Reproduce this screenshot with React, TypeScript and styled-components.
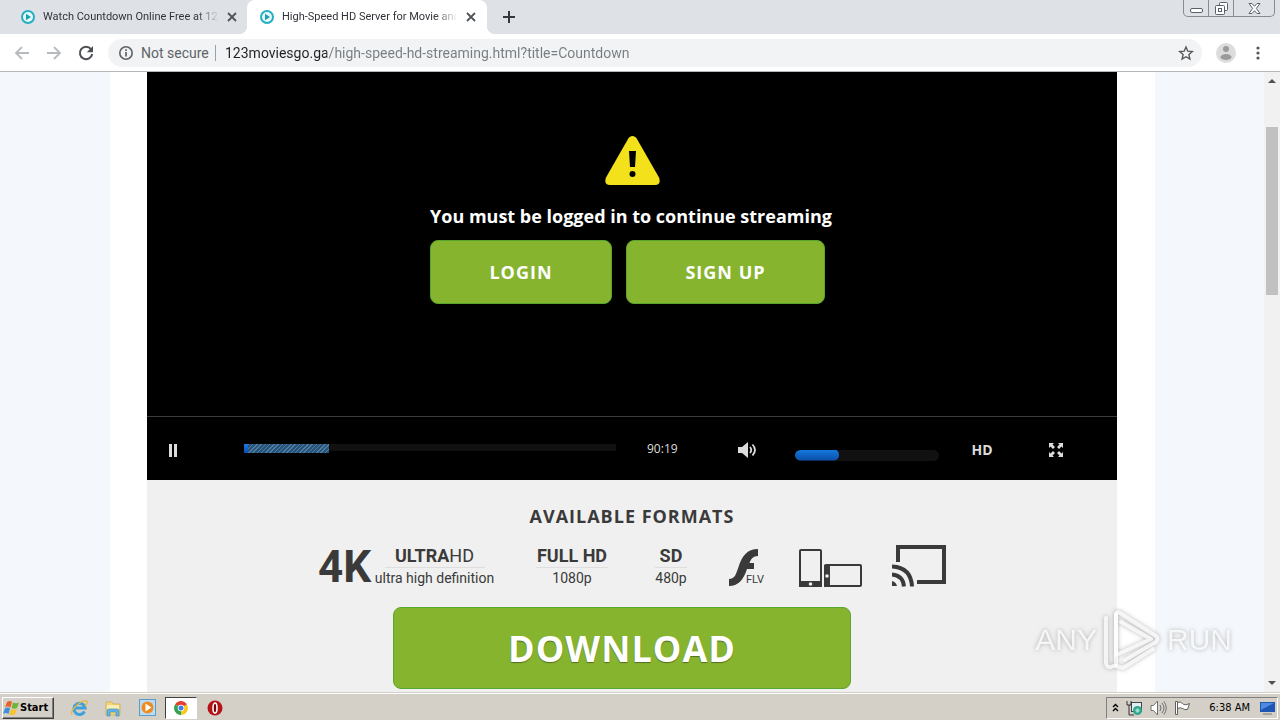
import React, { useState } from "react";
import styled, { createGlobalStyle, css } from "styled-components";

const uiFont = `"DejaVu Sans Condensed", "DejaVu Sans", sans-serif`;
const chromeFont = `Roboto, sans-serif`;

const GlobalStyle = createGlobalStyle`
  * { box-sizing: border-box; }
  html, body { margin: 0; height: 100%; overflow: hidden; }
  body { font-family: "Open Sans", sans-serif; background: #fff; }
  button { margin: 0; padding: 0; border: 0; background: none; font: inherit; color: inherit; cursor: pointer; }
  svg { display: block; flex: none; }
  h1, h2, p { margin: 0; }
`;

const Desktop = styled.div`
  display: flex;
  flex-direction: column;
  height: 100vh;
`;

/* Browser chrome */

const TabStrip = styled.div`
  display: flex;
  align-items: stretch;
  height: 34px;
  flex: none;
  background: #dee1e6;
  font: 11px ${chromeFont};
`;

const Tab = styled.div<{ $active?: boolean }>`
  position: relative;
  display: flex;
  align-items: center;
  width: ${(p) => (p.$active ? 240 : 247)}px;
  padding: 0 10px 0 ${(p) => (p.$active ? 12 : 20)}px;
  gap: 7px;
  color: #303338;
  border-radius: 8px 8px 0 0;
  background: ${(p) => (p.$active ? "#fff" : "transparent")};
  ${(p) =>
    p.$active &&
    css`
      &::before, &::after {
        content: "";
        position: absolute;
        bottom: 0;
        width: 8px;
        height: 8px;
      }
      &::before { left: -8px; background: radial-gradient(circle at 0 0, transparent 8px, #fff 8px); }
      &::after { right: -8px; background: radial-gradient(circle at 100% 0, transparent 8px, #fff 8px); }
    `}
`;

const TabTitle = styled.button`
  flex: 1;
  min-width: 0;
  overflow: hidden;
  white-space: nowrap;
  text-align: left;
  line-height: 16px;
  mask-image: linear-gradient(90deg, #000 calc(100% - 24px), transparent);
`;

const IconButton = styled.button<{ $w?: number }>`
  display: flex;
  align-items: center;
  justify-content: center;
  flex: none;
  width: ${(p) => p.$w ?? 16}px;
  height: 20px;
`;

const NewTab = styled(IconButton)`
  margin-left: 12px;
  align-self: center;
`;

const WindowButtons = styled.div`
  display: flex;
  height: 17px;
  margin: 0 5px 0 auto;
  border: 1px solid #868b94;
  border-top: 0;
  border-radius: 0 0 5px 5px;
`;

const WindowButton = styled.button<{ $w: number }>`
  display: flex;
  align-items: center;
  justify-content: center;
  width: ${(p) => p.$w}px;
  & + & { border-left: 1px solid #868b94; }
`;

const Toolbar = styled.div`
  display: flex;
  align-items: center;
  height: 38px;
  flex: none;
  padding: 0 14px 0 12px;
  background: #fff;
  border-bottom: 1px solid #b4b6b9;
`;

const NavButtons = styled.div`
  display: flex;
  gap: 12px;
`;

const AddressBar = styled.form`
  display: flex;
  align-items: center;
  flex: 1;
  height: 28px;
  margin: 0 14px 0 12px;
  padding: 0 8px 0 10px;
  border-radius: 14px;
  background: #f1f3f4;
  font: 14px ${chromeFont};
`;

const SecurityChip = styled.button`
  display: flex;
  align-items: center;
  gap: 7px;
  width: 98px;
  border-right: 1px solid #9aa0a6;
  color: #5f6368;
  line-height: 16px;
  white-space: nowrap;
`;

const Url = styled.input`
  flex: 1;
  min-width: 0;
  margin-left: 9px;
  padding: 0;
  border: 0;
  outline: 0;
  font: inherit;
  line-height: 20px;
  color: #5f6368;
  background: linear-gradient(90deg, #202124 102px, #777c81 102px);
  background-clip: text;
  -webkit-text-fill-color: transparent;
`;

const ToolbarEnd = styled.div`
  display: flex;
  align-items: center;
  gap: 14px;
`;

/* Page */

const Viewport = styled.div`
  position: relative;
  display: flex;
  flex: 1;
  min-height: 0;
  overflow: hidden;
  background: #f4f7fb;
`;

const Page = styled.main`
  flex: 1;
  min-width: 0;
  padding: 0 109px 0 110px;
`;

const Sheet = styled.div`
  padding: 0 38px 0 37px;
  background: #fff;
  height: 100%;
`;

const Video = styled.section`
  display: flex;
  flex-direction: column;
  align-items: center;
  height: 344px;
  padding-top: 64px;
  background: #000;
  color: #fff;
`;

const Notice = styled.div`
  width: 404px;
  margin-top: 18px;
`;

const NoticeText = styled.p`
  font-size: 18px;
  font-weight: 700;
  line-height: 26px;
  white-space: nowrap;
`;

const NoticeActions = styled.div`
  display: flex;
  gap: 14px;
  margin-top: 11px;
`;

const GreenButton = styled.button<{ $w: number; $large?: boolean }>`
  width: ${(p) => p.$w}px;
  height: ${(p) => (p.$large ? 82 : 64)}px;
  border: 1px solid #57a82e;
  border-radius: 8px;
  background: #87b42f;
  color: #fff;
  font-size: ${(p) => (p.$large ? 36 : 18)}px;
  font-weight: 700;
  letter-spacing: 1px;
  text-shadow: ${(p) => (p.$large ? "0 1px 1px rgba(0, 0, 0, 0.4)" : "none")};
`;

const Controls = styled.div`
  display: flex;
  align-items: center;
  height: 64px;
  padding: 3px 51px 0 18px;
  border-top: 1px solid #3c3c3c;
  background: #000;
  color: #dcdcdc;
`;

const rangeReset = css`
  appearance: none;
  margin: 0;
  outline: 0;
  &::-webkit-slider-thumb { appearance: none; width: 1px; height: 1px; }
`;

const Seek = styled.input`
  ${rangeReset}
  flex: 1;
  min-width: 0;
  height: 9px;
  margin: 0 0 4px 63px;
  background:
    linear-gradient(#1a7be0, #0a4fb0) 0 0 / 4px 9px no-repeat,
    repeating-linear-gradient(135deg, #4f7fa0 0 1px, #28527c 1px 3px) 0 0 / 85px 9px no-repeat,
    linear-gradient(#111, #111) 0 0 / 100% 7px no-repeat;
`;

const Time = styled.time`
  width: 91px;
  margin: 0 0 2px 31px;
  font-size: 12px;
  line-height: 16px;
`;

const Volume = styled.input`
  ${rangeReset}
  width: 144px;
  height: 11px;
  margin: 10px 31px 0 38px;
  border-radius: 6px;
  background: #111;
  overflow: hidden;
  &::-webkit-slider-runnable-track {
    height: 11px;
    background: linear-gradient(#1478dc, #0a4ca8);
    clip-path: inset(0 100px 0 0 round 5px);
  }
`;

const Quality = styled.button`
  width: 24px;
  margin-right: 52px;
  font-size: 14px;
  font-weight: 700;
  line-height: 20px;
`;

const Formats = styled.section`
  display: flex;
  flex-direction: column;
  align-items: center;
  height: 100%;
  padding-top: 24px;
  background: #f0f0f0;
  color: #3a3a3a;
`;

const FormatsTitle = styled.h2`
  font-size: 18px;
  font-weight: 700;
  line-height: 24px;
  letter-spacing: 1px;
`;

const FormatRow = styled.ul`
  display: flex;
  align-items: flex-start;
  gap: 30px;
  height: 44px;
  margin: 16px 0 19px;
  padding: 0;
  list-style: none;
  font-family: Roboto, sans-serif;
`;

const Format = styled.li<{ $w: number }>`
  display: flex;
  width: ${(p) => p.$w}px;
  height: 44px;
  align-items: flex-end;
`;

const FourK = styled.strong`
  width: 51px;
  font-size: 44px;
  line-height: 42px;
  font-weight: 700;
`;

const Label = styled.div`
  flex: 1;
  font-size: 14px;
  line-height: 20px;
  text-align: center;
  white-space: nowrap;
`;

const LabelName = styled.div<{ $w: number }>`
  width: ${(p) => p.$w}px;
  margin: 0 auto;
  border-bottom: 1px solid #dedede;
  font-size: 18px;
  line-height: 22px;
`;

const DownloadSlot = styled.div`
  margin-right: 20px;
`;

const Scrollbar = styled.div`
  display: flex;
  flex-direction: column;
  align-items: center;
  width: 16px;
  flex: none;
  padding: 6px 0;
  background: #f1f1f1;
`;

const ScrollThumb = styled.div`
  width: 12px;
  height: 168px;
  margin: 43px 0 auto;
  background: #c1c1c1;
`;

const Watermark = styled.div`
  position: absolute;
  right: 48px;
  bottom: 20px;
  display: flex;
  align-items: center;
  gap: 4px;
  height: 64px;
  color: rgba(255, 255, 255, 0.8);
  font: 30px "Liberation Sans", sans-serif;
  filter: drop-shadow(0 0 2px rgba(80, 80, 80, 0.5));
`;

/* Taskbar */

const Taskbar = styled.footer`
  display: flex;
  align-items: center;
  height: 28px;
  flex: none;
  padding: 2px 2px 0;
  border-top: 1px solid #d4d0c8;
  box-shadow: inset 0 1px #fff;
  background: #d4d0c8;
  font: 11px ${uiFont};
  color: #000;
`;

const StartButton = styled.button`
  display: flex;
  align-items: center;
  width: 52px;
  height: 22px;
  border: 1px solid;
  border-color: #fff #404040 #404040 #fff;
  box-shadow: inset -1px -1px #808080;
  font-weight: 700;
`;

const Launcher = styled.div`
  display: flex;
  gap: 2px;
  margin-left: 9px;
`;

const TaskButton = styled.button<{ $active?: boolean }>`
  display: flex;
  align-items: center;
  justify-content: center;
  width: 32px;
  height: 22px;
  border: 1px solid transparent;
  ${(p) =>
    p.$active &&
    css`
      background: #fff;
      border-color: #404040 #fff #fff #404040;
    `}
`;

const Tray = styled.div`
  display: flex;
  align-items: center;
  height: 22px;
  margin-left: auto;
  padding: 0 2px 0 4px;
  gap: 7px;
  border: 1px solid;
  border-color: #808080 #fff #fff #808080;
`;

const Clock = styled.time`
  margin: 0 2px 0 11px;
`;

const PlayDisc = () => (
  <svg width="16" height="16" viewBox="0 0 16 16">
    <circle cx="8" cy="8" r="6" fill="#e6f8fa" stroke="#25afc0" strokeWidth="2" />
    <path d="M6 4.8v6.4L11 8z" fill="#1c9fb2" />
  </svg>
);

const Cross = () => (
  <svg width="10" height="10" viewBox="0 0 10 10" stroke="#50545a" strokeWidth="1.8">
    <path d="M1 1l8 8M9 1l-8 8" />
  </svg>
);

const Arrow = ({ flip }: { flip?: boolean }) => (
  <svg width="16" height="16" viewBox="0 0 16 16" fill="none" stroke="#b8bbbe" strokeWidth="1.8">
    <path d={flip ? "M1 8h13M8 2l6 6-6 6" : "M15 8H2M8 2L2 8l6 6"} />
  </svg>
);

const Explorer = () => (
  <svg width="18" height="18" viewBox="0 0 18 18">
    <path d="M2 3h6l1 2h7v11H2z" fill="#f3d57a" stroke="#c9a23e" strokeWidth=".6" />
    <path d="M3 6h12v5H3z" fill="#fbeeb4" />
    <path d="M3 17v-5q0-2 2-2h8q2 0 2 2v5h-3v-4H6v4z" fill="#63b4e4" stroke="#3b89bb" strokeWidth=".6" />
  </svg>
);

export default function App() {
  const [url, setUrl] = useState("123moviesgo.ga/high-speed-hd-streaming.html?title=Countdown");
  const [seek, setSeek] = useState(23);
  const [volume, setVolume] = useState(30);

  return (
    <Desktop>
      <GlobalStyle />
      <TabStrip>
        <Tab>
          <PlayDisc />
          <TabTitle>Watch Countdown Online Free at 12</TabTitle>
          <IconButton $w={10} aria-label="Close tab"><Cross /></IconButton>
        </Tab>
        <Tab $active>
          <PlayDisc />
          <TabTitle>High-Speed HD Server for Movie and</TabTitle>
          <IconButton $w={12} aria-label="Close tab"><Cross /></IconButton>
        </Tab>
        <NewTab $w={20} aria-label="New tab">
          <svg width="12" height="12" viewBox="0 0 12 12" stroke="#34373c" strokeWidth="2"><path d="M6 0v12M0 6h12" /></svg>
        </NewTab>
        <WindowButtons>
          <WindowButton $w={24} aria-label="Minimize">
            <svg width="13" height="12" viewBox="0 0 13 12"><rect x=".5" y="6.500" width="12" height="4" rx="1.500" fill="#fff" stroke="#5a606b" /></svg>
          </WindowButton>
          <WindowButton $w={25} aria-label="Restore">
            <svg width="13" height="13" viewBox="0 0 13 13" fill="#fff" stroke="#5a606b"><rect x="4.500" y=".5" width="8" height="8" rx="1" /><rect x=".5" y="3.500" width="9" height="9" rx="1" /><rect x="3.500" y="6.500" width="3" height="3" /></svg>
          </WindowButton>
          <WindowButton $w={41} aria-label="Close">
            <svg width="13" height="11" viewBox="0 0 13 11"><path d="M1 .5h3l2.500 2.800L9 .5h3L8.300 5.500l3.700 5H9L6.500 7.700 4 10.500H1l3.700-5z" fill="#fff" stroke="#5a606b" /></svg>
          </WindowButton>
        </WindowButtons>
      </TabStrip>

      <Toolbar>
        <NavButtons>
          <IconButton $w={20} aria-label="Back"><Arrow /></IconButton>
          <IconButton $w={20} aria-label="Forward"><Arrow flip /></IconButton>
          <IconButton $w={20} aria-label="Reload">
            <svg width="16" height="16" viewBox="0 0 16 16"><path d="M13 4.200A6.200 6.200 0 1 0 14.200 9" fill="none" stroke="#4c5055" strokeWidth="2" /><path d="M15 1v6.200H8.800z" fill="#4c5055" /></svg>
          </IconButton>
        </NavButtons>
        <AddressBar onSubmit={(e) => e.preventDefault()}>
          <SecurityChip type="button">
            <svg width="16" height="16" viewBox="0 0 16 16"><circle cx="8" cy="8" r="6.200" fill="none" stroke="#5f6368" strokeWidth="1.600" /><path d="M8 7v4.500M8 4.300v1.700" stroke="#5f6368" strokeWidth="1.700" /></svg>
            Not secure
          </SecurityChip>
          <Url aria-label="Address" value={url} spellCheck={false} onChange={(e) => setUrl(e.target.value)} />
          <IconButton type="button" $w={16} aria-label="Bookmark">
            <svg width="16" height="16" viewBox="0 0 16 16"><path d="M8 2l1.800 4.200 4.500.4-3.400 3 1 4.400L8 11.700 4.100 14l1-4.400-3.400-3 4.500-.4z" fill="none" stroke="#54585d" strokeWidth="1.400" /></svg>
          </IconButton>
        </AddressBar>
        <ToolbarEnd>
          <IconButton $w={20} aria-label="Profile">
            <svg width="20" height="20" viewBox="0 0 20 20"><circle cx="10" cy="10" r="10" fill="#dcdcdc" /><circle cx="10" cy="6" r="3" fill="#9b9b9b" /><ellipse cx="10" cy="14" rx="5.500" ry="3" fill="#9b9b9b" /></svg>
          </IconButton>
          <IconButton $w={16} aria-label="Menu">
            <svg width="4" height="14" viewBox="0 0 4 14" fill="#54585d"><circle cx="2" cy="2" r="1.600" /><circle cx="2" cy="7" r="1.600" /><circle cx="2" cy="12" r="1.600" /></svg>
          </IconButton>
        </ToolbarEnd>
      </Toolbar>

      <Viewport>
        <Page>
          <Sheet>
            <Video>
              <svg width="55" height="49" viewBox="0 0 55 49">
                <path d="M23.300 2.500a4.900 4.900 0 0 1 8.400 0L54 41.500Q56.500 48.500 50 49H5Q-1.500 48.500 1 41.500z" fill="#f3e11b" />
                <path d="M24 15h7l-1 16h-5z" /><circle cx="27.500" cy="38" r="3" />
              </svg>
              <Notice>
                <NoticeText>You must be logged in to continue streaming</NoticeText>
                <NoticeActions>
                  <GreenButton $w={182}>LOGIN</GreenButton>
                  <GreenButton $w={199}>SIGN UP</GreenButton>
                </NoticeActions>
              </Notice>
            </Video>
            <Controls>
              <IconButton $w={16} aria-label="Pause">
                <svg width="8" height="13" viewBox="0 0 8 13" fill="#dcdcdc"><path d="M0 0h3v13H0zM5 0h3v13H5z" /></svg>
              </IconButton>
              <Seek type="range" aria-label="Seek" value={seek} onChange={(e) => setSeek(+e.target.value)} />
              <Time>90:19</Time>
              <IconButton $w={19} aria-label="Mute">
                <svg width="19" height="16" viewBox="0 0 19 16"><path d="M0 5h4l6-5v16l-6-5H0z" fill="#dcdcdc" /><path d="M12 5q2.500 3 0 6M14.500 2.500q5 5.500 0 11" fill="none" stroke="#dcdcdc" strokeWidth="1.800" /></svg>
              </IconButton>
              <Volume type="range" aria-label="Volume" value={volume} onChange={(e) => setVolume(+e.target.value)} />
              <Quality>HD</Quality>
              <IconButton $w={20} aria-label="Full screen">
                <svg width="16" height="16" viewBox="0 0 16 16" fill="#dcdcdc"><path d="M1 1h5L4.500 2.500 7 5 5 7 2.500 4.500 1 6zM15 1v5l-1.500-1.500L11 7 9 5l2.500-2.500L10 1zM1 15v-5l1.500 1.500L5 9l2 2-2.500 2.500L6 15zM15 15h-5l1.500-1.500L9 11l2-2 2.500 2.500L15 10z" /></svg>
              </IconButton>
            </Controls>
            <Formats>
              <FormatsTitle>AVAILABLE FORMATS</FormatsTitle>
              <FormatRow>
                <Format $w={182}>
                  <FourK>4K</FourK>
                  <Label><LabelName $w={100}><b>ULTRA</b>HD</LabelName>ultra high definition</Label>
                </Format>
                <Format $w={84}><Label><LabelName $w={72}><b>FULL HD</b></LabelName>1080p</Label></Format>
                <Format $w={54}><Label><LabelName $w={32}><b>SD</b></LabelName>480p</Label></Format>
                <Format $w={41}>
                  <svg width="41" height="44" viewBox="0 0 41 44">
                    <path d="M30 5v7c-5 0-7 3-8.500 7H26v6h-7C15.500 36 10 42 1 42v-7c6 0 7-5 9.500-12C14 12 19 5 30 5z" fill="#3a3a3a" />
                    <text x="18" y="39" fontSize="11" fill="#3a3a3a">FLV</text>
                  </svg>
                </Format>
                <Format $w={63}>
                  <svg width="63" height="44" viewBox="0 0 63 44">
                    <rect x="1" y="6" width="21" height="36" rx="1" fill="none" stroke="#3a3a3a" strokeWidth="2" />
                    <path d="M0 37h23v6H0zM25 21h6v22h-6z" fill="#3a3a3a" />
                    <rect x="26" y="21" width="36" height="21" rx="1" fill="none" stroke="#3a3a3a" strokeWidth="2" />
                    <circle cx="11.500" cy="40" r="1.800" fill="#f0f0f0" /><circle cx="28" cy="32" r="1.800" fill="#f0f0f0" />
                  </svg>
                </Format>
                <Format $w={54}>
                  <svg width="54" height="44" viewBox="0 0 54 44" fill="none" stroke="#3a3a3a" strokeWidth="4">
                    <path d="M6 18V3h46v35H25" />
                    <path d="M0 22.500q19 1 20 20M0 30.500q11 1 12 12" strokeWidth="4" /><path d="M0 37q4 1 5 5H0z" fill="#3a3a3a" stroke="none" />
                  </svg>
                </Format>
              </FormatRow>
              <DownloadSlot><GreenButton $large $w={458}>DOWNLOAD</GreenButton></DownloadSlot>
            </Formats>
          </Sheet>
        </Page>
        <Scrollbar>
          <svg width="8" height="6" viewBox="0 0 8 6" fill="#505050"><path d="M0 5l4-4 4 4z" /></svg>
          <ScrollThumb />
          <svg width="8" height="6" viewBox="0 0 8 6" fill="#505050"><path d="M0 1l4 4 4-4z" /></svg>
        </Scrollbar>
        <Watermark>
          <span>ANY</span>
          <svg width="62" height="64" viewBox="0 0 62 64" fill="none" stroke="rgba(255,255,255,.8)" strokeWidth="4" strokeLinejoin="round" strokeLinecap="round">
            <path d="M15 47V7q0-4 4-2l36 23q3 3 0 6L24 52" /><path d="M15 47l35-16L20 14M5 10v45q1 5 5 4l5-2V6" /><path d="M15 58l7 2 30-19" />
          </svg>
          <span>RUN</span>
        </Watermark>
      </Viewport>

      <Taskbar>
        <StartButton>
          <svg width="17" height="16" viewBox="0 0 17 16">
            <path d="M4 2q3-2 5 0L7.500 7.500q-3-2-5.500 0z" fill="#e8622a" /><path d="M10 2.500q3 1.500 6 0L14 8q-3 1.500-5.500 0z" fill="#6fb53a" />
            <path d="M2 8.500q3-2 5 0L5.500 14q-3-2-5.500 0z" fill="#3d8fdc" /><path d="M8 9q3 1.500 6 0l-2 5.500q-3 1.500-5.500 0z" fill="#f7c32e" />
          </svg>
          Start
        </StartButton>
        <Launcher>
          <TaskButton aria-label="Internet Explorer">
            <svg width="18" height="18" viewBox="0 0 18 18" fill="none"><path d="M14.500 12.500a5.600 5.600 0 1 1 .6-3.500H5" stroke="#3fa0dc" strokeWidth="3" /><path d="M2 16Q0 13 6 7t11-5q1 2-2 5" stroke="#e8b83c" strokeWidth="1.200" /></svg>
          </TaskButton>
          <TaskButton aria-label="Explorer"><Explorer /></TaskButton>
          <TaskButton aria-label="Media Player">
            <svg width="17" height="17" viewBox="0 0 17 17"><rect x=".5" y=".5" width="16" height="16" fill="#b8dcf4" stroke="#5b9bc8" /><circle cx="8.500" cy="8.500" r="6" fill="#f08a1c" /><path d="M6.500 4.500v8l6-4z" fill="#fff" /></svg>
          </TaskButton>
          <TaskButton $active aria-label="Chrome">
            <svg width="14" height="14" viewBox="0 0 14 14"><path d="M7 7L1 3.500A7 7 0 0 1 13 3.500z" fill="#df4132" /><path d="M7 7l6-3.500A7 7 0 0 1 7 14z" fill="#f8c81e" /><path d="M7 7v7A7 7 0 0 1 1 3.500z" fill="#31a052" /><circle cx="7" cy="7" r="3.300" fill="#fff" /><circle cx="7" cy="7" r="2.500" fill="#3f7fe8" /></svg>
          </TaskButton>
          <TaskButton aria-label="Opera">
            <svg width="16" height="16" viewBox="0 0 16 16"><circle cx="8" cy="8" r="7.500" fill="#b51218" /><ellipse cx="8" cy="8" rx="2" ry="5" fill="#7a0508" stroke="#fff" strokeWidth="1.600" /></svg>
          </TaskButton>
        </Launcher>
        <Tray>
          <IconButton $w={8} aria-label="Show hidden icons">
            <svg width="7" height="9" viewBox="0 0 7 9" fill="none" stroke="#000" strokeWidth="1.400"><path d="M1 4l2.500-2.500L6 4M1 8l2.500-2.500L6 8" /></svg>
          </IconButton>
          <IconButton $w={17} aria-label="Network">
            <svg width="17" height="16" viewBox="0 0 17 16"><rect x="5.500" y="2.500" width="10" height="9" fill="#dfeef2" stroke="#444" /><path d="M1 1v4h4V1M3 5v10h5" fill="none" stroke="#333" /><circle cx="11.500" cy="10.500" r="4.500" fill="#32a58e" /><path d="M9 10l3-2 2 3-3 2z" fill="#9be0c8" /></svg>
          </IconButton>
          <IconButton $w={17} aria-label="Sound">
            <svg width="17" height="16" viewBox="0 0 17 16" fill="#fff" stroke="#707070"><path d="M1 5.500h2.500L7.500 1v14L3.500 10.500H1z" /><path d="M10 5q2 3 0 6M12 3q4 5 0 10M14 1.500q4.500 6.500 0 13" fill="none" /></svg>
          </IconButton>
          <IconButton $w={17} aria-label="Action Center">
            <svg width="17" height="16" viewBox="0 0 17 16" fill="#fff" stroke="#606060"><path d="M3.500 2.500q3-1.500 5 1t7 0l-2 6q-3 .5-5-1t-5 0z" /><path d="M1.500 1.500h2v13h-2z" /></svg>
          </IconButton>
          <Clock>6:38 AM</Clock>
          <IconButton $w={16} aria-label="Show desktop">
            <svg width="15" height="15" viewBox="0 0 15 15"><path d="M0 2h15v10H0z" fill="#1e56b4" /><path d="M1 3h13L1 10z" fill="#4d8ae0" /><path d="M3 14h9" stroke="#777" /></svg>
          </IconButton>
        </Tray>
      </Taskbar>
    </Desktop>
  );
}
